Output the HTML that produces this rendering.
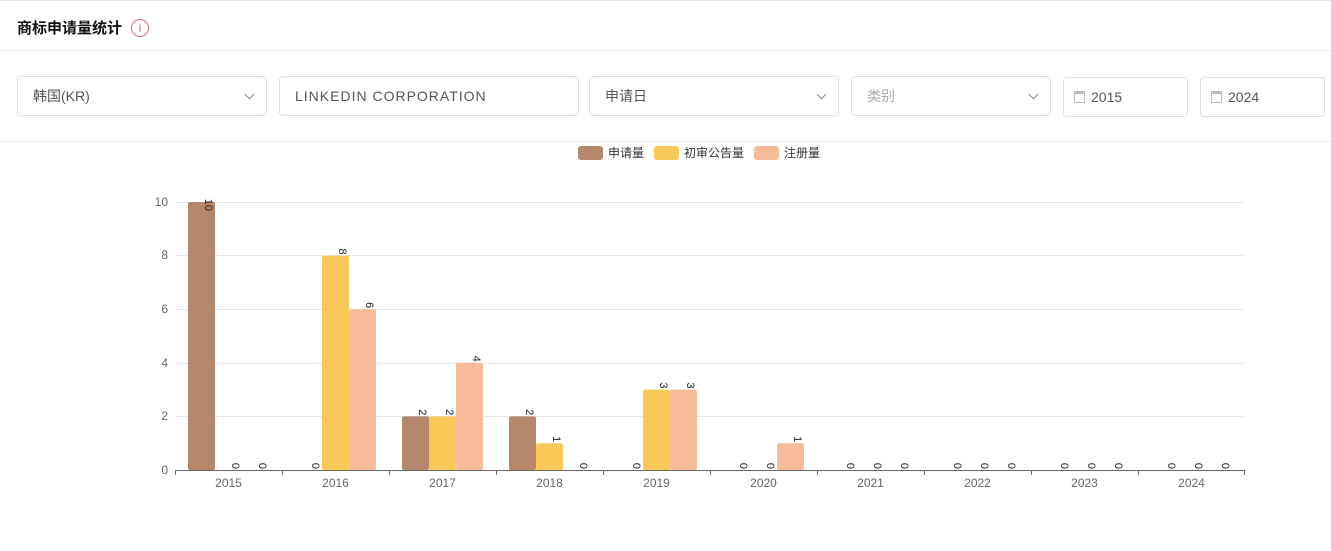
<!DOCTYPE html>
<html><head><meta charset="utf-8"><style>
*{box-sizing:border-box;margin:0;padding:0}
body{width:1331px;height:551px;background:#fff;font-family:"Liberation Sans","Noto Sans CJK SC",sans-serif;position:relative;overflow:hidden;color:#333}
.top{position:absolute;left:0;top:0;width:1331px;height:1px;background:#e8e8e8}
.title{position:absolute;left:17px;top:17px;font-size:15px;font-weight:bold;color:#111}
.info{position:absolute;left:131px;top:19px;width:18px;height:18px;border:1px solid #e06a6a;border-radius:50%;color:#e06a6a;font-size:12px;text-align:center;line-height:16px;font-weight:300}
.hr{position:absolute;left:0;width:1331px;height:1px;background:#ebebeb}
.box{position:absolute;height:40px;border:1px solid #dcdfe6;border-radius:4px;font-size:14px;line-height:38px;padding-left:15px;color:#555}
.box .arr{position:absolute;right:13px;top:14px;width:7px;height:7px;border-right:1px solid #888;border-bottom:1px solid #888;transform:rotate(45deg)}
.cal{display:inline-block;width:11px;height:12px;border:1px solid #bbb;border-top-width:3px;margin-right:6px;vertical-align:-1px;border-radius:1px}
</style></head><body>
<div class="top"></div>
<div class="title">商标申请量统计</div>
<div class="info">i</div>
<div class="hr" style="top:50px"></div>
<div class="box" style="left:17px;top:76px;width:250px">韩国(KR)<span class="arr"></span></div>
<div class="box" style="left:279px;top:76px;width:300px;letter-spacing:1px">LINKEDIN CORPORATION</div>
<div class="box" style="left:589px;top:76px;width:250px">申请日<span class="arr"></span></div>
<div class="box" style="left:851px;top:76px;width:200px;color:#aaa">类别<span class="arr"></span></div>
<div class="box" style="left:1063px;top:77px;width:125px;padding-left:10px"><span class="cal"></span>2015</div>
<div class="box" style="left:1200px;top:77px;width:125px;padding-left:10px"><span class="cal"></span>2024</div>
<div class="hr" style="top:141px"></div>
<svg width="1331" height="551" style="position:absolute;left:0;top:0" font-family="Liberation Sans, Noto Sans CJK SC, sans-serif">
<g font-size="12" fill="#333">
<rect x="578" y="146" width="25" height="14" rx="3" fill="#b5876b"/><text x="608" y="157">申请量</text>
<rect x="654" y="146" width="25" height="14" rx="3" fill="#f8c858"/><text x="684" y="157">初审公告量</text>
<rect x="754" y="146" width="25" height="14" rx="3" fill="#f6bc9a"/><text x="784" y="157">注册量</text>
</g>
<g stroke="#e6e6e6" stroke-width="1">
<line x1="175" y1="202.5" x2="1245" y2="202.5"/><line x1="175" y1="255.5" x2="1245" y2="255.5"/><line x1="175" y1="309.5" x2="1245" y2="309.5"/><line x1="175" y1="363.5" x2="1245" y2="363.5"/><line x1="175" y1="416.5" x2="1245" y2="416.5"/>
</g>
<g font-size="12" fill="#666" text-anchor="end">
<text x="168" y="206">10</text><text x="168" y="259">8</text><text x="168" y="313">6</text><text x="168" y="367">4</text><text x="168" y="420">2</text><text x="168" y="474">0</text>
</g>
<g>
<rect x="188" y="202" width="27" height="268" rx="2" fill="#b5876b"/>
<rect x="322" y="255.6" width="27" height="214.4" rx="2" fill="#f8c858"/>
<rect x="349" y="309.2" width="27" height="160.8" rx="2" fill="#f6bc9a"/>
<rect x="402" y="416.4" width="27" height="53.6" rx="2" fill="#b5876b"/>
<rect x="429" y="416.4" width="27" height="53.6" rx="2" fill="#f8c858"/>
<rect x="456" y="362.8" width="27" height="107.2" rx="2" fill="#f6bc9a"/>
<rect x="509" y="416.4" width="27" height="53.6" rx="2" fill="#b5876b"/>
<rect x="536" y="443.2" width="27" height="26.8" rx="2" fill="#f8c858"/>
<rect x="643" y="389.6" width="27" height="80.4" rx="2" fill="#f8c858"/>
<rect x="670" y="389.6" width="27" height="80.4" rx="2" fill="#f6bc9a"/>
<rect x="777" y="443.2" width="27" height="26.8" rx="2" fill="#f6bc9a"/>
</g>
<g stroke="#666" stroke-width="1">
<line x1="175" y1="470.5" x2="1245" y2="470.5"/>
<line x1="175.5" y1="470" x2="175.5" y2="475"/><line x1="282.5" y1="470" x2="282.5" y2="475"/><line x1="389.5" y1="470" x2="389.5" y2="475"/><line x1="496.5" y1="470" x2="496.5" y2="475"/><line x1="603.5" y1="470" x2="603.5" y2="475"/><line x1="710.5" y1="470" x2="710.5" y2="475"/><line x1="817.5" y1="470" x2="817.5" y2="475"/><line x1="924.5" y1="470" x2="924.5" y2="475"/><line x1="1031.5" y1="470" x2="1031.5" y2="475"/><line x1="1138.5" y1="470" x2="1138.5" y2="475"/><line x1="1244.5" y1="470" x2="1244.5" y2="475"/>
</g>
<g font-size="12" fill="#666" text-anchor="middle">
<text x="228.5" y="487">2015</text><text x="335.5" y="487">2016</text><text x="442.5" y="487">2017</text><text x="549.5" y="487">2018</text><text x="656.5" y="487">2019</text><text x="763.5" y="487">2020</text><text x="870.5" y="487">2021</text><text x="977.5" y="487">2022</text><text x="1084.5" y="487">2023</text><text x="1191.5" y="487">2024</text>
</g>
<g font-size="11" fill="#222" text-anchor="end">
<text transform="translate(205,211) rotate(90)">10</text>
<text transform="translate(232,469) rotate(90)">0</text>
<text transform="translate(259,469) rotate(90)">0</text>
<text transform="translate(312,469) rotate(90)">0</text>
<text transform="translate(339,254.6) rotate(90)">8</text>
<text transform="translate(366,308.2) rotate(90)">6</text>
<text transform="translate(419,415.4) rotate(90)">2</text>
<text transform="translate(446,415.4) rotate(90)">2</text>
<text transform="translate(473,361.8) rotate(90)">4</text>
<text transform="translate(526,415.4) rotate(90)">2</text>
<text transform="translate(553,442.2) rotate(90)">1</text>
<text transform="translate(580,469) rotate(90)">0</text>
<text transform="translate(633,469) rotate(90)">0</text>
<text transform="translate(660,388.6) rotate(90)">3</text>
<text transform="translate(687,388.6) rotate(90)">3</text>
<text transform="translate(740,469) rotate(90)">0</text>
<text transform="translate(767,469) rotate(90)">0</text>
<text transform="translate(794,442.2) rotate(90)">1</text>
<text transform="translate(847,469) rotate(90)">0</text>
<text transform="translate(874,469) rotate(90)">0</text>
<text transform="translate(901,469) rotate(90)">0</text>
<text transform="translate(954,469) rotate(90)">0</text>
<text transform="translate(981,469) rotate(90)">0</text>
<text transform="translate(1008,469) rotate(90)">0</text>
<text transform="translate(1061,469) rotate(90)">0</text>
<text transform="translate(1088,469) rotate(90)">0</text>
<text transform="translate(1115,469) rotate(90)">0</text>
<text transform="translate(1168,469) rotate(90)">0</text>
<text transform="translate(1195,469) rotate(90)">0</text>
<text transform="translate(1222,469) rotate(90)">0</text>
</g>
</svg>
</body></html>
